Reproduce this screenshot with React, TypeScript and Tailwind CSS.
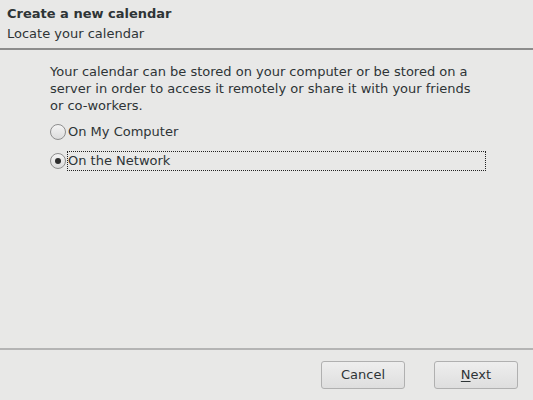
import React, { useState } from 'react';

const font = { fontFamily: '"DejaVu Sans", sans-serif' };

function Radio({ checked }: { checked: boolean }) {
  return (
    <span className="w-[16px] h-[16px] rounded-full border border-[#8e8e8e] bg-gradient-to-b from-[#f4f4f4] to-[#dcdcdc] flex items-center justify-center shrink-0">
      {checked && <span className="w-[6px] h-[6px] rounded-full bg-[#2e2e2e]" />}
    </span>
  );
}

export default function App() {
  const [choice, setChoice] = useState<'local' | 'network'>('network');

  return (
    <div className="w-[533px] h-[400px] bg-[#e8e8e7] text-[#2e3436] text-[13px] flex flex-col" style={font}>
      <div className="px-[7px] pt-[5px] h-[50px] border-b-2 border-[#8c8c8c]">
        <div className="font-bold leading-[17px]">Create a new calendar</div>
        <div className="leading-[17px] mt-[3px]">Locate your calendar</div>
      </div>

      <div className="flex-1 pl-[50px] pr-[47px] pt-[13px]">
        <p className="leading-[17px] w-[436px]">
          Your calendar can be stored on your computer or be stored on a server in order to access it remotely or share it with your friends or co-workers.
        </p>
        <div className="mt-[9px] flex flex-col gap-[11px]">
          <label className="flex items-center h-[18px] cursor-default" onClick={() => setChoice('local')}>
            <Radio checked={choice === 'local'} />
            <span className={`ml-px pr-2 leading-[18px] flex-1 border border-dotted ${choice === 'local' ? 'border-[#222]' : 'border-transparent'}`}>On My Computer</span>
          </label>
          <label className="flex items-center h-[18px] cursor-default" onClick={() => setChoice('network')}>
            <Radio checked={choice === 'network'} />
            <span className={`ml-px pr-2 leading-[18px] flex-1 border border-dotted ${choice === 'network' ? 'border-[#222]' : 'border-transparent'}`}>On the Network</span>
          </label>
        </div>
      </div>

      <div className="h-[52px] border-t-2 border-[#b4b4b4] flex items-start justify-end gap-[29px] pt-[11px] pr-[15px]">
        <button className="w-[84px] h-[28px] rounded-[3px] border border-[#b0b0b0] bg-gradient-to-b from-[#eeeeee] to-[#dedede] text-[13px]">Cancel</button>
        <button className="w-[84px] h-[28px] rounded-[3px] border border-[#b0b0b0] bg-gradient-to-b from-[#eeeeee] to-[#dedede] text-[13px]">
          <span className="underline underline-offset-2">N</span>ext
        </button>
      </div>
    </div>
  );
}
